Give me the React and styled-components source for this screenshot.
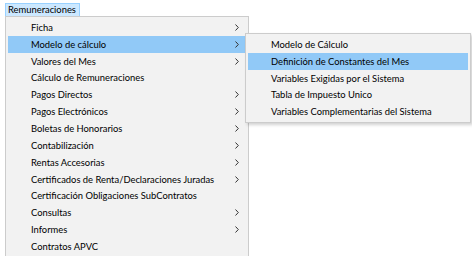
import React from "react";
import styled, { createGlobalStyle } from "styled-components";

const Global = createGlobalStyle`
  html, body { margin: 0; padding: 0; background: #ffffff; }
  body { font-family: "Lato", "Noto Sans", sans-serif; font-size: 9.4px; color: #000; }
`;

const Page = styled.div`
  position: relative;
  width: 472px;
  height: 256px;
  overflow: hidden;
  padding: 3px 0 0 5px;
  box-sizing: border-box;
`;

const MenuBar = styled.div`
  display: flex;
  height: 13px;
`;

const BarItem = styled.div`
  display: flex;
  align-items: center;
  padding: 0 3px 0 2px;
  background: #cce8ff;
  border: 1px solid #99d1ff;
  border-bottom: none;
  height: 12px;
  line-height: 12px;
`;

const Panel = styled.div`
  position: ${(p) => (p.$sub ? "absolute" : "relative")};
  ${(p) => (p.$sub ? "left: 245px; top: 33px;" : "")}
  width: ${(p) => p.$w}px;
  box-sizing: border-box;
  background: #f2f2f2;
  border: 1px solid #cccccc;
  padding: 2px;
  display: flex;
  flex-direction: column;
  box-shadow: ${(p) => (p.$sub ? "2px 2px 3px rgba(0,0,0,0.18)" : "none")};
`;

const Row = styled.div`
  display: flex;
  align-items: center;
  height: 16.85px;
  padding-left: ${(p) => p.$indent}px;
  padding-right: 7px;
  background: ${(p) => (p.$active ? "#91c9f7" : "transparent")};
  white-space: nowrap;
`;

const Label = styled.span`
  flex: 1;
`;

const Arrow = styled.svg`
  width: 4px;
  height: 7px;
  flex: none;
`;

const main = [
  ["Ficha", true],
  ["Modelo de cálculo", true, true],
  ["Valores del Mes", true],
  ["Cálculo de Remuneraciones", false],
  ["Pagos Directos", true],
  ["Pagos Electrónicos", true],
  ["Boletas de Honorarios", true],
  ["Contabilización", true],
  ["Rentas Accesorias", true],
  ["Certificados de Renta/Declaraciones Juradas", true],
  ["Certificación Obligaciones SubContratos", false],
  ["Consultas", true],
  ["Informes", true],
  ["Contratos APVC", false],
];

const sub = [
  ["Modelo de Cálculo"],
  ["Definición de Constantes del Mes", true],
  ["Variables Exigidas por el Sistema"],
  ["Tabla de Impuesto Unico"],
  ["Variables Complementarias del Sistema"],
];

const Chevron = () => (
  <Arrow viewBox="0 0 4 7">
    <path d="M0.5 0.5 L3.3 3.5 L0.5 6.5" fill="none" stroke="#333" strokeWidth="1" />
  </Arrow>
);

export default function App() {
  return (
    <Page>
      <Global />
      <MenuBar>
        <BarItem>Remuneraciones</BarItem>
      </MenuBar>
      <Panel $w={244}>
        {main.map(([t, arrow, active]) => (
          <Row key={t} $indent={23} $active={active}>
            <Label>{t}</Label>
            {arrow && <Chevron />}
          </Row>
        ))}
      </Panel>
      <Panel $sub $w={226}>
        {sub.map(([t, active]) => (
          <Row key={t} $indent={23} $active={active}>
            <Label>{t}</Label>
          </Row>
        ))}
      </Panel>
    </Page>
  );
}
